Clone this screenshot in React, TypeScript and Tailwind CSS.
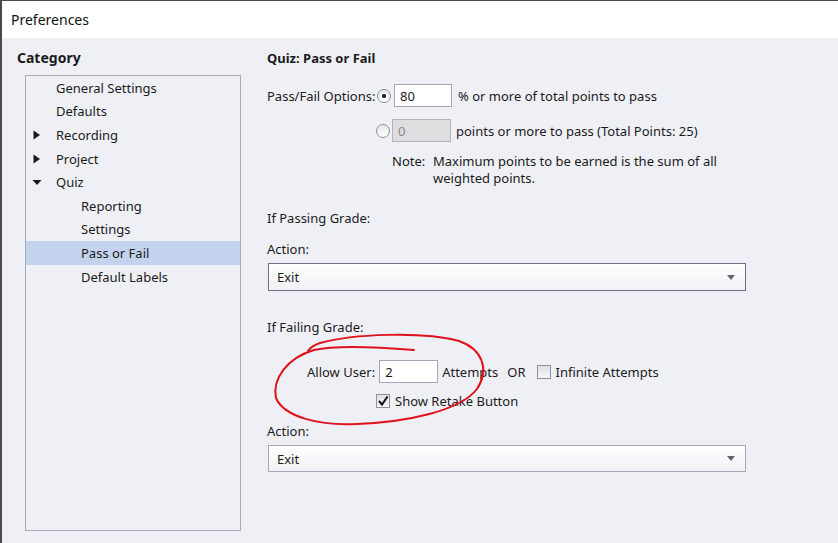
import React from "react";

const font = { fontFamily: '"Noto Sans", "Open Sans", sans-serif' };

function Arrow({ open }: { open?: boolean }) {
  return (
    <svg width="10" height="10" viewBox="0 0 10 10" className="shrink-0">
      {open ? (
        <polygon points="0.5,3 9.5,3 5,8" fill="#1a1a1a" />
      ) : (
        <polygon points="1.5,0.5 8,5 1.5,9.5" fill="#1a1a1a" />
      )}
    </svg>
  );
}

const tree = [
  { label: "General Settings", level: 0 },
  { label: "Defaults", level: 0 },
  { label: "Recording", level: 0, arrow: "closed" },
  { label: "Project", level: 0, arrow: "closed" },
  { label: "Quiz", level: 0, arrow: "open" },
  { label: "Reporting", level: 1 },
  { label: "Settings", level: 1 },
  { label: "Pass or Fail", level: 1, selected: true },
  { label: "Default Labels", level: 1 },
];

function Radio({ checked }: { checked?: boolean }) {
  return (
    <span className="w-[14px] h-[14px] rounded-full border border-[#8d8f9f] bg-gradient-to-b from-[#e6e7ec] to-white flex items-center justify-center shrink-0">
      {checked && <span className="w-[4px] h-[4px] rounded-full bg-[#111]" />}
    </span>
  );
}

function Checkbox({ checked }: { checked?: boolean }) {
  return (
    <span className="w-[14px] h-[14px] border border-[#8e90a0] bg-gradient-to-b from-[#dfe0e6] to-[#f7f7f9] flex items-center justify-center shrink-0">
      {checked && (
        <svg width="12" height="12" viewBox="0 0 12 12">
          <path d="M2 6 L5 9.5 L10.5 1.5" stroke="#111" strokeWidth="2" fill="none" />
        </svg>
      )}
    </span>
  );
}

function Select({ dark }: { dark?: boolean }) {
  return (
    <div
      className={`w-[478px] flex items-center justify-between pl-[8px] pr-[10px] bg-gradient-to-b from-white to-[#f1f2f6] border ${
        dark ? "h-[28px] border-[#6c6e86]" : "h-[27px] border-[#a6a8ba]"
      }`}
    >
      <span>Exit</span>
      <svg width="8" height="5" viewBox="0 0 8 5">
        <polygon points="0,0 8,0 4,5" fill="#60626f" />
      </svg>
    </div>
  );
}

export default function App() {
  return (
    <div
      className="relative w-[838px] h-[543px] bg-[#eff0f6] text-[13px] text-[#1b1b1b] overflow-hidden border-l-2 border-t border-[#4a4a4a] flex flex-col"
      style={font}
    >
      {/* title bar */}
      <div className="h-[37px] bg-white flex items-center pl-[9px] text-[14px] text-[#111] shrink-0">
        Preferences
      </div>

      <div className="flex flex-1">
        {/* category column */}
        <div className="w-[248px] pl-[15px] pt-[11px] shrink-0">
          <div className="font-bold text-[14px] leading-[18px]">Category</div>
          <div className="mt-[8px] ml-[8px] w-[216px] h-[456px] border border-[#a9abbd]">
            {tree.map((t) => (
              <div
                key={t.label}
                className={`h-[23.6px] flex items-center leading-[16px] ${
                  t.selected ? "bg-[#c3d3ee]" : ""
                }`}
              >
                <div className="w-[30px] flex justify-end pr-[14px]">
                  {t.arrow && <Arrow open={t.arrow === "open"} />}
                </div>
                <span className={t.level === 1 ? "pl-[25px]" : ""}>{t.label}</span>
              </div>
            ))}
          </div>
        </div>

        {/* right panel */}
        <div className="pl-[17px] pt-[12px] leading-[16px]">
          <div className="font-bold">Quiz: Pass or Fail</div>

          <div className="mt-[18px] flex items-center h-[23px]">
            <span className="w-[110px]">Pass/Fail Options:</span>
            <Radio checked />
            <div className="ml-[3px] w-[58px] h-[23px] bg-white border border-[#a3a6b8] flex items-center pl-[5px]">
              80
            </div>
            <span className="ml-[6px]">% or more of total points to pass</span>
          </div>

          <div className="mt-[12px] flex items-center h-[23px]">
            <span className="w-[109px]" />
            <Radio />
            <div className="ml-[2px] w-[59px] h-[23px] bg-[#dedee0] border border-[#b3b4bc] flex items-center pl-[5px] text-[#8a8a8a]">
              0
            </div>
            <span className="ml-[5px]">points or more to pass (Total Points: 25)</span>
          </div>

          <div className="mt-[11px] flex pl-[125px] leading-[17px]">
            <span className="w-[41px] shrink-0">Note:</span>
            <span className="w-[300px]">
              Maximum points to be earned is the sum of all weighted points.
            </span>
          </div>

          <div className="mt-[23px]">If Passing Grade:</div>
          <div className="mt-[15px]">Action:</div>
          <div className="mt-[6px] ml-[1px]">
            <Select dark />
          </div>

          <div className="mt-[28px]">If Failing Grade:</div>
          <div className="mt-[25px] flex items-center h-[23px] pl-[40px]">
            <span>Allow User:</span>
            <div className="ml-[4px] w-[59px] h-[23px] bg-white border border-[#a3a6b8] flex items-center pl-[5px]">
              2
            </div>
            <span className="ml-[4px]">Attempts</span>
            <span className="ml-[9px]">OR</span>
            <span className="ml-[11px]">
              <Checkbox />
            </span>
            <span className="ml-[5px]">Infinite Attempts</span>
          </div>
          <div className="mt-[10px] flex items-center h-[16px] pl-[109px]">
            <Checkbox checked />
            <span className="ml-[5px]">Show Retake Button</span>
          </div>

          <div className="mt-[14px]">Action:</div>
          <div className="mt-[6px] ml-[1px]">
            <Select />
          </div>
        </div>
      </div>

      {/* hand-drawn annotation */}
      <svg
        className="absolute left-0 top-0 pointer-events-none"
        width="838"
        height="543"
        viewBox="0 0 838 543"
      >
        <path
          d="M 412 349 C 375 346, 335 344, 312 349 C 285 357, 270 378, 274 397 C 282 416, 318 425, 355 423 C 405 421, 458 410, 475 388 C 488 368, 480 348, 457 340 C 420 330, 350 333, 318 342 C 312 344, 308 347, 306 350"
          stroke="#e0121b"
          strokeWidth="2"
          fill="none"
          strokeLinecap="round"
        />
      </svg>
    </div>
  );
}
